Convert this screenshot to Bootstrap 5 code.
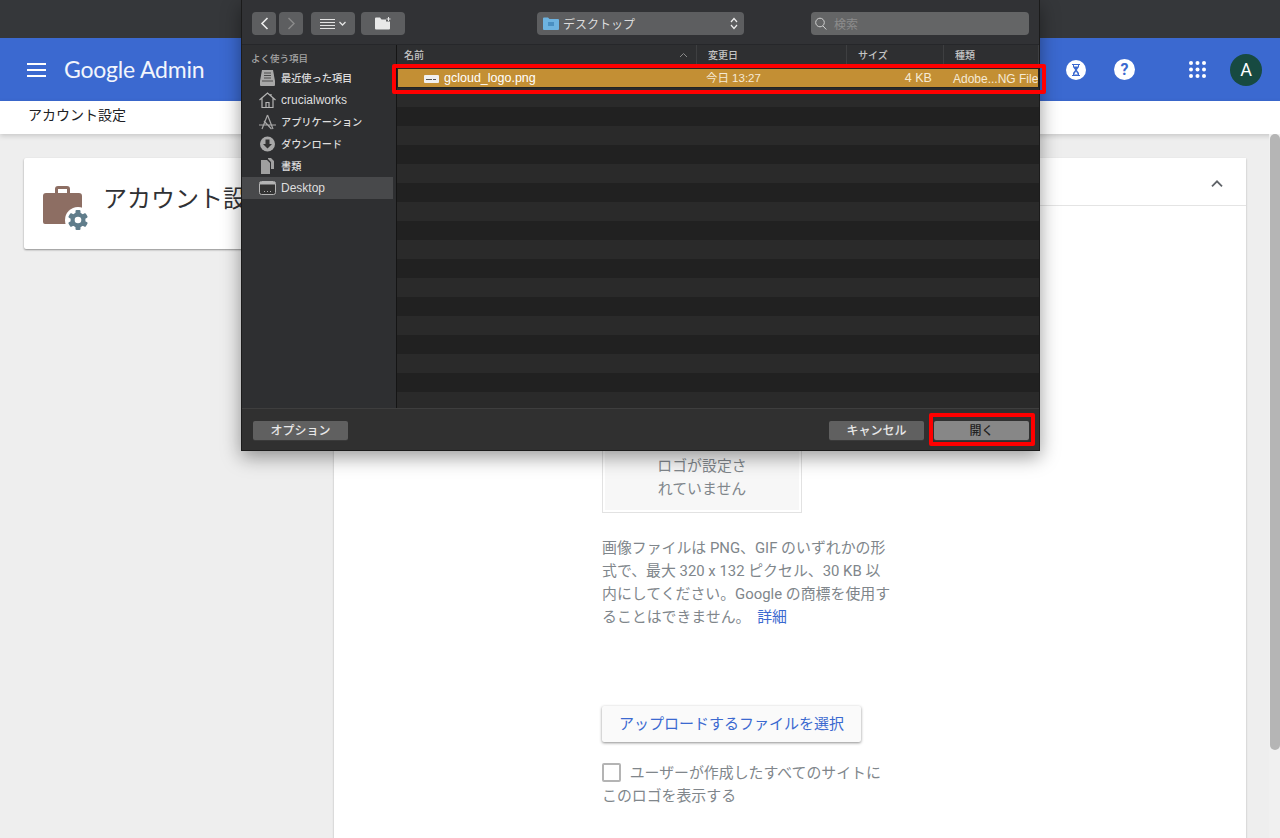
<!DOCTYPE html>
<html lang="ja">
<head>
    <meta charset="UTF-8">
    <meta name="viewport" content="width=device-width, initial-scale=1.0">
    <title>Google Admin</title>
    <link href="https://cdn.jsdelivr.net/npm/bootstrap@5.3.0/dist/css/bootstrap.min.css" rel="stylesheet">
    <style>
        html, body { height: 838px; overflow: hidden; }
        body { font-family: Roboto, "Noto Sans CJK JP", sans-serif; background: #eeeeee; color: #202124; position: relative; }
        .chrome-bar { height: 38px; background: #35373a; }
        .admin-bar { height: 63px; background: #3b69d0; color: #fff; padding-left: 27px; }
        .brand-text { font-family: Lato, sans-serif; font-size: 23px; letter-spacing: -.2px; margin-left: 18px; color: #f2f5fc; }
        .admin-icons { margin-left: auto; padding-right: 18px; }
        .round-ico { width: 20px; height: 20px; border-radius: 50%; background: #fff; margin-right: 28px; color: #3b69d0; }
        .round-ico.help { width: 21px; height: 21px; font-weight: 700; font-size: 16px; margin-right: 54px; line-height: 1; }
        .dots { margin-right: 24px; }
        .avatar-a { width: 32px; height: 32px; border-radius: 50%; background: #174a41; color: #fff; font-size: 18px; }
        .crumb-bar { height: 33px; background: #fff; padding: 0 0 5px 28px; font-size: 14px; box-shadow: 0 2px 5px rgba(0,0,0,.16); position: relative; }
        .page-area { height: 704px; padding: 24px 0 0 24px; }
        .title-card { width: 286px; height: 91px; background: #fff; border-radius: 2px; box-shadow: 0 1px 2px rgba(0,0,0,.4); padding-left: 18px; font-size: 24px; white-space: nowrap; overflow: hidden; }
        .title-card svg { margin-right: 14px; margin-top: 8px; }
        .title-card span { margin-top: -10px; color: #303134; }
        .setting-panel { width: 912px; margin-left: 24px; height: 700px; background: #fff; box-shadow: 0 1px 2px rgba(0,0,0,.25); }
        .panel-head { height: 48px; border-bottom: 1px solid #e4e4e4; padding: 4px 23px 0 0; }
        .panel-body { padding: 204px 0 0 268px; color: #80868b; font-size: 14.9px; line-height: 23px; }
        .logo-box { width: 200px; height: 103px; border: 1px solid #e2e2e2; background: #f7f7f7; outline: 2px solid #fff; outline-offset: -3px; text-align: center; padding-top: 44px; }
        .help-text { margin: 24px 0 0; white-space: nowrap; }
        .help-text a { color: #3b69d0; text-decoration: none; margin-left: 3px; }
        .upload-btn { display: block; width: 259px; height: 36px; margin-top: 77px; background: #fafafa; color: #3b69d0; font-size: 15px; border-radius: 2px; box-shadow: 0 1px 3px rgba(0,0,0,.45); text-align: center; line-height: 36px; }
        .site-check { margin-top: 20px; white-space: nowrap; }
        .check-box { display: inline-block; width: 19px; height: 19px; border: 2px solid #b4b4b4; border-radius: 2px; vertical-align: -4px; margin: 0 5px 0 0; }
        .scroll-track { position: absolute; top: 134px; right: 0; width: 11px; height: 704px; background: #f0f0f0; }
        .scroll-thumb { width: 10px; height: 616px; margin-left: 1px; background: #b5b5b5; border-radius: 5px; }

        .file-sheet { position: absolute; left: 241px; top: 0; width: 799px; height: 451px; background: #2e2f31; box-shadow: 0 6px 18px rgba(0,0,0,.4); color: #e2e2e2; font-family: "Liberation Sans", "Noto Sans CJK JP", sans-serif; border: 1px solid #1b1b1b; border-top: 0; }
        .sheet-tools { height: 45px; background: #313235; border-bottom: 1px solid #26272a; padding: 12px 0 0 10px; }
        .tool-btn { height: 23px; background: #5d5e60; border-radius: 4px; }
        .tool-arrow { width: 24px; }
        .tool-next { margin-left: 3px; }
        .tool-view { width: 44px; margin-left: 8px; }
        .tool-folder { width: 44px; margin-left: 6px; }
        .path-select { width: 207px; margin-left: 132px; font-size: 12px; color: #dcdcdc; padding: 0 6px; }
        .search-box { width: 218px; margin-left: 67px; font-size: 12px; color: #8c8c8c; background: #646566; padding: 0 4px; }
        .tool-btn span { padding-top: 2px; }
        .search-box span { margin-left: 3px; }
        .sheet-main { height: 363px; }
        .side-list { width: 155px; background: #2e2f31; border-right: 1px solid #151515; font-size: 10.2px; font-weight: 500; padding-top: 7px; }
        .side-head { font-size: 9.5px; color: #a5a5a5; padding: 0 0 2px 9px; height: 15px; }
        .side-row { height: 22px; padding-left: 17px; gap: 5px; color: #dedede; }
        .side-row span { padding-top: 2px; }
        .side-row .side-latin { font-size: 12px; font-weight: 400; padding-top: 0; }
        .side-row.is-on { background: #48494b; margin-right: 3px; }
        .file-pane { flex: 1; min-width: 0; background: #2a2a2a; overflow: hidden; }
        .col-head { height: 23px; background: #2e2f31; font-size: 10px; font-weight: 500; color: #c5c5c5; border-bottom: 1px solid #232323; }
        .col-head > div { padding: 0 0 2px 11px; height: 100%; border-right: 1px solid #3e3f41; }
        .col-head > .col-name { padding-left: 7px; padding-right: 8px; }
        .col-name { width: 300px; }
        .col-date { width: 150px; }
        .col-size { width: 97px; }
        .file-row { height: 20px; background: #c38f34; color: #f5ead6; font-size: 12.5px; border: 1px solid #222; padding-top: 1px; }
        .file-row .col-name { padding-left: 26px; color: #fff; gap: 5px; }
        .file-row .col-date { padding-left: 9px; font-size: 11.5px; }
        .file-row .col-size { text-align: right; padding-right: 11px; font-size: 12.5px; }
        .file-row .col-kind { padding-left: 10px; white-space: nowrap; overflow: hidden; font-size: 12px; }
        .stripes { height: 320px; background: repeating-linear-gradient(#2a2a2a 0 19px, #212121 19px 38px); }
        .sheet-foot { height: 42px; background: #303030; border-top: 1px solid #3e3e3e; padding: 2px 10px 0 11px; font-size: 12px; font-weight: 500; }
        .foot-btn { height: 19px; width: 95px; background: #606060; border-radius: 2px; color: #e8e8e8; text-align: center; line-height: 20px; box-shadow: 0 1px 0 #3a3a3a; }
        .open-btn { background: #878787; color: #222; margin-left: 10px; }
        .red-mark { position: absolute; border: 4px solid #f00; border-radius: 2px; }
        .mark-row { left: 150px; top: 64px; width: 654px; height: 30px; }
        .mark-open { left: 687px; top: 413px; width: 106px; height: 33px; }
    </style>
</head>
<body>
    <div class="chrome-bar"></div>

    <!-- Admin header -->
    <div class="admin-bar d-flex align-items-center">
        <svg width="19" height="14" viewBox="0 0 19 14" fill="#fff"><rect y="0" width="19" height="2"/><rect y="6" width="19" height="2"/><rect y="12" width="19" height="2"/></svg>
        <span class="brand-text">Google Admin</span>
        <div class="admin-icons d-flex align-items-center">
            <div class="round-ico d-flex align-items-center justify-content-center">
                <svg width="8" height="12" viewBox="0 0 8 12" fill="#3b69d0"><path d="M0 0h8v1H7v2L4.800 6 7 9v2h1v1H0v-1h1V9l2.200-3L1 3V1H0z"/><path fill="#fff" d="M2 1h4v1.600H2zM4 7.500L6 10.500H2z"/></svg>
            </div>
            <div class="round-ico help d-flex align-items-center justify-content-center">?</div>
            <svg class="dots" width="17" height="17" viewBox="0 0 17 17" fill="#fff"><circle cx="2" cy="2" r="2"/><circle cx="8.500" cy="2" r="2"/><circle cx="15" cy="2" r="2"/><circle cx="2" cy="8.500" r="2"/><circle cx="8.500" cy="8.500" r="2"/><circle cx="15" cy="8.500" r="2"/><circle cx="2" cy="15" r="2"/><circle cx="8.500" cy="15" r="2"/><circle cx="15" cy="15" r="2"/></svg>
            <div class="avatar-a d-flex align-items-center justify-content-center">A</div>
        </div>
    </div>
    <div class="crumb-bar d-flex align-items-center">アカウント設定</div>

    <!-- Page content behind the dialog -->
    <div class="page-area d-flex align-items-start">
        <div class="title-card d-flex align-items-center">
            <svg width="47" height="46" viewBox="0 0 47 46">
                <path fill="#8d6e63" d="M13 4a3 3 0 0 1 3-3h9a3 3 0 0 1 3 3v4h9a3 3 0 0 1 3 3v26a2 2 0 0 1-2 2H3a2 2 0 0 1-2-2V11a3 3 0 0 1 3-3h9zm3 4h9V4h-9z"/>
                <circle cx="36" cy="35" r="13" fill="#fff"/>
                <g fill="#607d8b"><circle cx="36" cy="35" r="7.500"/><rect x="33.500" y="25" width="5" height="20" rx="1"/><rect x="33.500" y="25" width="5" height="20" rx="1" transform="rotate(60 36 35)"/><rect x="33.500" y="25" width="5" height="20" rx="1" transform="rotate(120 36 35)"/></g>
                <circle cx="36" cy="35" r="3.300" fill="#fff"/>
            </svg>
            <span>アカウント設定</span>
        </div>
        <div class="setting-panel">
            <div class="panel-head d-flex align-items-center justify-content-end">
                <svg width="12" height="7" viewBox="0 0 12 7" fill="none" stroke="#5f6368" stroke-width="1.800"><path d="M1 6.300l5-5 5 5"/></svg>
            </div>
            <div class="panel-body">
                <div class="logo-box">ロゴが設定さ<br>れていません</div>
                <p class="help-text">画像ファイルは PNG、GIF のいずれかの形<br>式で、最大 320 x 132 ピクセル、30 KB 以<br>内にしてください。Google の商標を使用す<br>ることはできません。 <a href="#">詳細</a></p>
                <div class="upload-btn">アップロードするファイルを選択</div>
                <div class="site-check"><span class="check-box"></span> ユーザーが作成したすべてのサイトに<br>このロゴを表示する</div>
            </div>
        </div>
    </div>
    <div class="scroll-track"><div class="scroll-thumb"></div></div>

    <!-- File open dialog -->
    <div class="file-sheet">
        <div class="sheet-tools d-flex">
            <div class="tool-btn tool-arrow d-flex align-items-center justify-content-center">
                <svg width="9" height="13" viewBox="0 0 9 13" fill="none" stroke="#eee" stroke-width="1.600"><path d="M7.500 1L2 6.500 7.500 12"/></svg>
            </div>
            <div class="tool-btn tool-arrow tool-next d-flex align-items-center justify-content-center">
                <svg width="9" height="13" viewBox="0 0 9 13" fill="none" stroke="#8b8b8b" stroke-width="1.400"><path d="M1.500 1L7 6.500 1.500 12"/></svg>
            </div>
            <div class="tool-btn tool-view d-flex align-items-center justify-content-center gap-1">
                <svg width="15" height="10" viewBox="0 0 15 10" stroke="#e4e4e4" stroke-width="1"><path d="M0 .5h15M0 3.500h15M0 6.500h15M0 9.500h15"/></svg>
                <svg width="7" height="5" viewBox="0 0 7 5" fill="none" stroke="#e4e4e4" stroke-width="1.300"><path d="M.5 1l3 3 3-3"/></svg>
            </div>
            <div class="tool-btn tool-folder d-flex align-items-center justify-content-center">
                <svg width="17" height="13" viewBox="0 0 17 13" fill="#e8e8e8"><path d="M0 1.500A1 1 0 0 1 1 .5h4l1.500 2H11v2H15v7a1 1 0 0 1-1 1H1a1 1 0 0 1-1-1z"/><path d="M13 0h1v1.500h1.500v1H14V4h-1V2.500h-1.500v-1H13z"/></svg>
            </div>
            <div class="tool-btn path-select d-flex align-items-center gap-1">
                <svg width="16" height="13" viewBox="0 0 16 13"><path fill="#6db3e0" d="M0 1.500A1 1 0 0 1 1 .5h4l1.500 1.500H15a1 1 0 0 1 1 1V12a1 1 0 0 1-1 1H1a1 1 0 0 1-1-1z"/><rect x="5" y="5" width="6" height="4" fill="#4a90c2"/></svg>
                <span>デスクトップ</span>
                <svg class="ms-auto" width="8" height="13" viewBox="0 0 8 13" fill="none" stroke="#eee" stroke-width="1.200"><path d="M1 5l3-3.500L7 5M1 8l3 3.500L7 8"/></svg>
            </div>
            <div class="tool-btn search-box d-flex align-items-center gap-1">
                <svg width="12" height="13" viewBox="0 0 12 13" fill="none" stroke="#d0d0d0" stroke-width="1"><circle cx="5" cy="5.500" r="4.300"/><path d="M8 9l3.300 3.500"/></svg>
                <span>検索</span>
            </div>
        </div>

        <div class="sheet-main d-flex">
            <div class="side-list">
                <div class="side-head">よく使う項目</div>
                <div class="side-row d-flex align-items-center">
                    <svg width="17" height="16" viewBox="0 0 17 16"><path fill="#a8a8a8" d="M3 0h11l2 11v4a1 1 0 0 1-1 1H2a1 1 0 0 1-1-1v-4z"/><path stroke="#4a4a4a" d="M5 3h7M5 5.500h7M5 8h7M3 11h11"/></svg>
                    <span>最近使った項目</span>
                </div>
                <div class="side-row d-flex align-items-center">
                    <svg width="17" height="16" viewBox="0 0 17 16" fill="none" stroke="#b4b4b4" stroke-width="1.200"><path d="M.5 8l8-7 8 7M3 6v9.500h11V6M7 15.500v-5h3v5M12 2v2.500"/></svg>
                    <span class="side-latin">crucialworks</span>
                </div>
                <div class="side-row d-flex align-items-center">
                    <svg width="17" height="16" viewBox="0 0 17 16" fill="none" stroke="#a8a8a8" stroke-width="1.200"><path d="M8.500 1L3 15M8.500 1L14 15M0 11h17M5 7l7.500 8"/></svg>
                    <span>アプリケーション</span>
                </div>
                <div class="side-row d-flex align-items-center">
                    <svg width="17" height="16" viewBox="0 0 17 16"><circle cx="8.500" cy="8" r="7.500" fill="#a8a8a8"/><path fill="#333" d="M6.500 3.500h4V8h2.500l-4.500 4.500L4 8h2.500z"/></svg>
                    <span>ダウンロード</span>
                </div>
                <div class="side-row d-flex align-items-center">
                    <svg width="17" height="16" viewBox="0 0 17 16" fill="#a0a0a0"><path d="M2 2h6l3 3v11H2z"/><path d="M9 0h3l3 3v8h-3V4l-3-3z"/></svg>
                    <span>書類</span>
                </div>
                <div class="side-row is-on d-flex align-items-center">
                    <svg width="17" height="14" viewBox="0 0 17 14"><rect x=".5" y=".5" width="16" height="13" rx="2" fill="#333" stroke="#b4b4b4"/><rect x="1" y="1" width="15" height="2.500" fill="#b4b4b4"/><path stroke="#b4b4b4" d="M5 10.500h1M8 10.500h1M11 10.500h1"/></svg>
                    <span class="side-latin">Desktop</span>
                </div>
            </div>

            <div class="file-pane">
                <div class="col-head d-flex">
                    <div class="col-name d-flex align-items-center justify-content-between">
                        <span>名前</span>
                        <svg width="9" height="6" viewBox="0 0 9 6" fill="none" stroke="#8a8a8a"><path d="M1 5l3.500-3.500L8 5"/></svg>
                    </div>
                    <div class="col-date d-flex align-items-center">変更日</div>
                    <div class="col-size d-flex align-items-center">サイズ</div>
                    <div class="flex-grow-1 d-flex align-items-center">種類</div>
                </div>
                <div class="file-row d-flex align-items-center">
                    <div class="col-name d-flex align-items-center">
                        <svg width="15" height="8" viewBox="0 0 15 8"><rect width="15" height="8" rx="1" fill="#f0f0f0"/><path stroke="#555" d="M2 4.500h6M9 4.500h3"/></svg>
                        <span>gcloud_logo.png</span>
                    </div>
                    <div class="col-date">今日 13:27</div>
                    <div class="col-size">4 KB</div>
                    <div class="col-kind">Adobe...NG File</div>
                </div>
                <div class="stripes"></div>
            </div>
        </div>

        <div class="sheet-foot d-flex align-items-center">
            <div class="foot-btn">オプション</div>
            <div class="foot-btn ms-auto">キャンセル</div>
            <div class="foot-btn open-btn">開く</div>
        </div>

        <div class="red-mark mark-row"></div>
        <div class="red-mark mark-open"></div>
    </div>

    <script src="https://cdn.jsdelivr.net/npm/bootstrap@5.3.0/dist/js/bootstrap.bundle.min.js"></script>
</body>
</html>
